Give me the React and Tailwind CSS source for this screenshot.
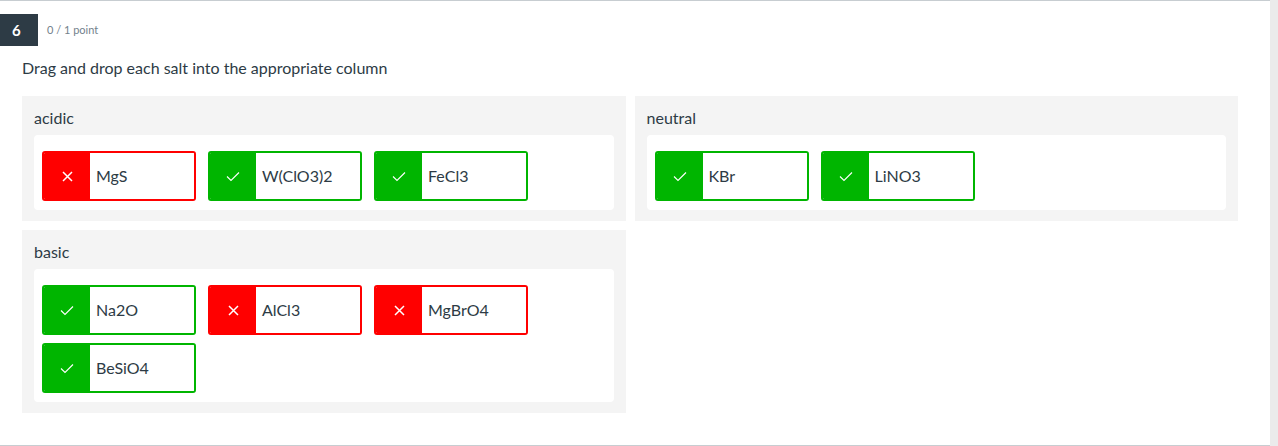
const columns = [
  {
    name: 'acidic',
    items: [
      { label: 'MgS', ok: false },
      { label: 'W(ClO3)2', ok: true },
      { label: 'FeCl3', ok: true },
    ],
  },
  {
    name: 'neutral',
    items: [
      { label: 'KBr', ok: true },
      { label: 'LiNO3', ok: true },
    ],
  },
  {
    name: 'basic',
    items: [
      { label: 'Na2O', ok: true },
      { label: 'AlCl3', ok: false },
      { label: 'MgBrO4', ok: false },
      { label: 'BeSiO4', ok: true },
    ],
  },
]

function CheckIcon() {
  return (
    <svg width="14" height="11" viewBox="0 0 14 11" fill="none">
      <path d="M1 5.5 L5 9.5 L13 1.5" stroke="white" strokeWidth="1.1" />
    </svg>
  )
}

function CrossIcon() {
  return (
    <svg width="11" height="11" viewBox="0 0 11 11" fill="none">
      <path d="M1 1 L10 10 M10 1 L1 10" stroke="white" strokeWidth="1.5" />
    </svg>
  )
}

function Salt({ label, ok }) {
  return (
    <div
      className={`flex w-[154px] h-[50px] rounded-[3px] border-2 overflow-hidden ${
        ok ? 'border-[#00b500]' : 'border-[#ff0000]'
      }`}
    >
      <div
        className={`w-[46px] flex items-center justify-center ${
          ok ? 'bg-[#00b500]' : 'bg-[#ff0000]'
        }`}
      >
        {ok ? <CheckIcon /> : <CrossIcon />}
      </div>
      <div className="flex-1 flex items-center pl-[6px] bg-white text-[16px] text-[#2d3b45]">
        {label}
      </div>
    </div>
  )
}

function Column({ name, items }) {
  return (
    <div className="bg-[#f4f4f4] pt-[12px] pb-[11px] px-[12px]">
      <div className="text-[16px] leading-[20px] text-[#2d3b45] mb-[7px]">{name}</div>
      <div className="bg-white rounded-[4px] pt-[16px] pb-[9px] px-[8px] flex flex-wrap gap-x-[12px] gap-y-[8px]">
        {items.map((it) => (
          <Salt key={it.label} {...it} />
        ))}
      </div>
    </div>
  )
}

export default function App() {
  return (
    <div className="flex w-[1278px] h-[446px] bg-white" style={{ fontFamily: 'Lato, "Open Sans", sans-serif' }}>
      <div className="w-[1270px] h-[446px] border-t border-b border-[#c7cdd1]">
        <div className="mt-[13px] flex items-center">
          <div className="w-[38px] h-[32px] bg-[#2d3b45] text-white font-bold text-[15px] flex items-center pl-[12px]">
            6
          </div>
          <div className="ml-[9px] text-[11px] text-[#73818c]">0 / 1 point</div>
        </div>
        <div className="mt-[12px] ml-[22px] text-[16px] leading-[20px] text-[#2d3b45]">
          Drag and drop each salt into the appropriate column
        </div>
        <div className="mt-[18px] ml-[22px] w-[1216px] grid grid-cols-2 gap-[9px] items-start">
          {columns.map((c) => (
            <Column key={c.name} {...c} />
          ))}
        </div>
      </div>
      <div className="flex-1 bg-[#ebebeb]" />
    </div>
  )
}
